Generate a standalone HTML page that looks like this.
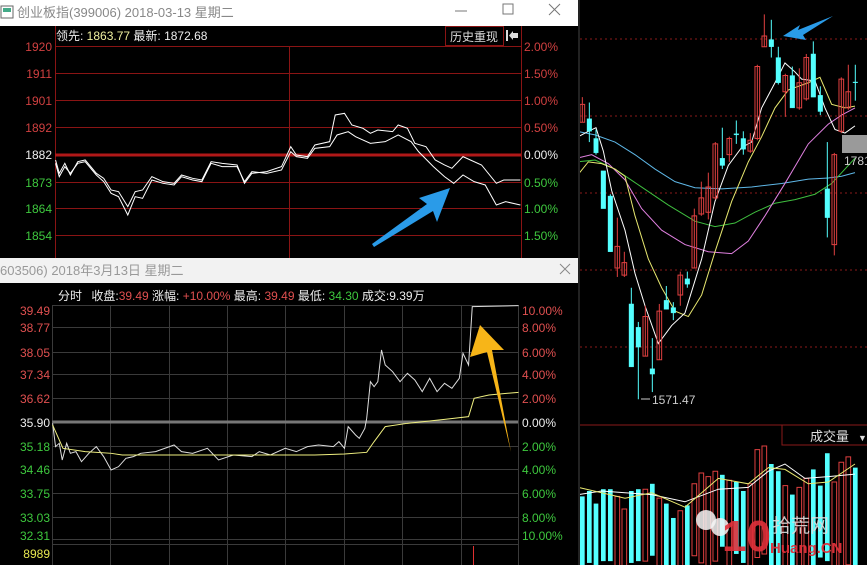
<!DOCTYPE html>
<html><head><meta charset="utf-8"><style>
html,body{margin:0;padding:0;background:#000;width:867px;height:565px;overflow:hidden}
svg{display:block}
text{font-family:"Liberation Sans","Noto Sans CJK SC",sans-serif}
.ns{vector-effect:non-scaling-stroke}
</style></head><body>
<svg width="867" height="565" viewBox="0 0 867 565" xmlns="http://www.w3.org/2000/svg" font-size="12">
<rect width="867" height="565" fill="#000"/>

<!-- RIGHT K-LINE PANEL -->
<g stroke="#8a1a1a" stroke-dasharray="2,3" stroke-width="1">
<line x1="580" y1="39" x2="867" y2="39"/><line x1="580" y1="116" x2="867" y2="116"/>
<line x1="580" y1="193" x2="867" y2="193"/><line x1="580" y1="270" x2="867" y2="270"/>
<line x1="580" y1="347" x2="867" y2="347"/>
</g>
<g transform="translate(575 0) scale(0.3333 0.3597)">
<g fill="none" stroke-width="1" class="ns">
<polyline class="ns" stroke="#5fb8e8" points="5,365 60,375 120,395 180,430 240,470 300,505 360,522 440,525 530,520 620,510 700,498 760,495 800,490 840,480"/>
<polyline class="ns" stroke="#3fbf3f" points="5,450 60,445 120,470 200,520 280,570 360,615 420,630 480,620 540,590 600,565 660,555 720,540 770,510 800,480 840,440"/>
<polyline class="ns" stroke="#e080e0" points="5,440 50,430 100,455 150,500 200,580 260,640 330,680 400,700 470,705 520,670 570,600 630,510 700,400 760,345 800,320 840,300"/>
<polyline class="ns" stroke="#e8e870" points="5,490 40,450 80,455 120,470 150,490 180,600 220,720 260,800 300,865 340,880 380,820 420,700 470,560 520,450 560,380 600,300 640,250 700,230 735,215 770,290 810,300 840,295"/>
<polyline class="ns" stroke="#fff" points="10,380 40,365 63,355 85,420 110,530 150,640 180,760 210,850 250,955 290,905 330,870 380,720 420,560 460,460 500,410 530,395 560,300 600,230 630,175 660,200 680,220 720,225 750,300 780,360 810,370 840,350"/>
</g>
<g class="ns" stroke-width="1">
<g stroke="#e04040" fill="none">
<line class="ns" x1="22" y1="270" x2="22" y2="340"/><rect class="ns" x="15" y="290" width="14" height="50"/>
<line class="ns" x1="127" y1="605" x2="127" y2="770"/><rect class="ns" x="120" y="685" width="14" height="60"/>
<line class="ns" x1="148" y1="700" x2="148" y2="770"/><rect class="ns" x="141" y="730" width="14" height="35"/>
<line class="ns" x1="211" y1="850" x2="211" y2="990"/><rect class="ns" x="204" y="880" width="14" height="110"/>
<line class="ns" x1="253" y1="845" x2="253" y2="1000"/><rect class="ns" x="246" y="865" width="14" height="135"/>
<line class="ns" x1="316" y1="755" x2="316" y2="850"/><rect class="ns" x="309" y="765" width="14" height="55"/>
<line class="ns" x1="358" y1="580" x2="358" y2="745"/><rect class="ns" x="351" y="600" width="14" height="145"/>
<line class="ns" x1="379" y1="505" x2="379" y2="600"/><rect class="ns" x="372" y="550" width="14" height="45"/>
<line class="ns" x1="400" y1="480" x2="400" y2="610"/><rect class="ns" x="393" y="520" width="14" height="70"/>
<line class="ns" x1="421" y1="395" x2="421" y2="555"/><rect class="ns" x="414" y="400" width="14" height="150"/>
<line class="ns" x1="463" y1="380" x2="463" y2="450"/><rect class="ns" x="456" y="385" width="14" height="45"/>
<line class="ns" x1="526" y1="370" x2="526" y2="425"/><rect class="ns" x="519" y="390" width="14" height="30"/>
<line class="ns" x1="547" y1="180" x2="547" y2="390"/><rect class="ns" x="540" y="185" width="14" height="200"/>
<line class="ns" x1="568" y1="40" x2="568" y2="130"/><rect class="ns" x="561" y="100" width="14" height="30"/>
<line class="ns" x1="631" y1="205" x2="631" y2="325"/><rect class="ns" x="624" y="210" width="14" height="45"/>
<line class="ns" x1="673" y1="190" x2="673" y2="305"/><rect class="ns" x="666" y="230" width="14" height="70"/>
<line class="ns" x1="694" y1="150" x2="694" y2="280"/><rect class="ns" x="687" y="160" width="14" height="115"/>
<line class="ns" x1="778" y1="425" x2="778" y2="710"/><rect class="ns" x="771" y="430" width="14" height="250"/>
<line class="ns" x1="799" y1="215" x2="799" y2="370"/><rect class="ns" x="792" y="220" width="14" height="145"/>
<line class="ns" x1="820" y1="180" x2="820" y2="305"/><rect class="ns" x="813" y="255" width="14" height="45"/>
</g>
<g stroke="#54ffff" fill="#54ffff">
<line class="ns" x1="43" y1="285" x2="43" y2="395"/><rect x="36" y="330" width="14" height="35"/>
<line class="ns" x1="63" y1="360" x2="63" y2="430"/><rect x="56" y="385" width="14" height="40"/>
<rect x="78" y="475" width="14" height="105"/>
<line class="ns" x1="106" y1="540" x2="106" y2="700"/><rect x="99" y="545" width="14" height="155"/>
<rect x="162" y="845" width="14" height="175"/><line class="ns" x1="169" y1="800" x2="169" y2="1020"/>
<line class="ns" x1="190" y1="895" x2="190" y2="1110"/><rect x="183" y="910" width="14" height="55"/>
<line class="ns" x1="232" y1="940" x2="232" y2="1090"/><rect x="225" y="1025" width="14" height="15"/>
<line class="ns" x1="274" y1="795" x2="274" y2="860"/><rect x="267" y="835" width="14" height="25"/>
<line class="ns" x1="295" y1="840" x2="295" y2="890"/><rect x="288" y="855" width="14" height="15"/>
<line class="ns" x1="337" y1="755" x2="337" y2="800"/><rect x="330" y="775" width="14" height="15"/>
<line class="ns" x1="442" y1="355" x2="442" y2="470"/><rect x="435" y="440" width="14" height="20"/>
<line class="ns" x1="484" y1="335" x2="484" y2="400"/><rect x="477" y="372" width="14" height="3"/>
<line class="ns" x1="505" y1="365" x2="505" y2="430"/><rect x="498" y="385" width="14" height="30"/>
<line class="ns" x1="589" y1="55" x2="589" y2="160"/><rect x="582" y="110" width="14" height="20"/>
<line class="ns" x1="610" y1="130" x2="610" y2="235"/><rect x="603" y="160" width="14" height="70"/>
<line class="ns" x1="652" y1="185" x2="652" y2="300"/><rect x="645" y="210" width="14" height="90"/>
<line class="ns" x1="715" y1="115" x2="715" y2="270"/><rect x="708" y="150" width="14" height="120"/>
<line class="ns" x1="736" y1="240" x2="736" y2="320"/><rect x="729" y="265" width="14" height="45"/>
<line class="ns" x1="757" y1="395" x2="757" y2="660"/><rect x="750" y="525" width="14" height="80"/>
<line class="ns" x1="841" y1="180" x2="841" y2="280"/><rect x="834" y="228" width="14" height="2"/>
</g>
</g>
</g>
<rect x="842" y="135" width="25" height="18" fill="#9a9a9a"/>
<text x="844" y="165" fill="#ccc" font-size="12">1781</text>
<line x1="641" y1="399" x2="650" y2="399" stroke="#ccc"/>
<text x="652" y="404" fill="#ccc" font-size="12">1571.47</text>
<polygon points="783,36 800,25 798,30 833,16 803,35 806,40" fill="#2a9be8"/>

<!-- right volume -->
<line x1="580" y1="425" x2="867" y2="425" stroke="#8a1a1a"/>
<rect x="782" y="425" width="90" height="20" fill="none" stroke="#8a1a1a"/>
<text x="810" y="441" fill="#ddd" font-size="13">成交量</text>
<text x="858" y="441" fill="#ddd" font-size="9">▼</text>
<g transform="translate(575 0) scale(0.3333 0.3597)">
<g fill="#54ffff">
<rect x="36" y="1365" width="14" height="200"/><rect x="56" y="1400" width="14" height="200"/>
<rect x="78" y="1360" width="14" height="200"/><rect x="99" y="1360" width="14" height="200"/>
<rect x="162" y="1365" width="14" height="200"/><rect x="183" y="1360" width="14" height="200"/>
<rect x="225" y="1345" width="14" height="200"/><rect x="267" y="1400" width="14" height="200"/>
<rect x="288" y="1440" width="14" height="200"/><rect x="330" y="1405" width="14" height="200"/>
<rect x="435" y="1320" width="14" height="200"/><rect x="477" y="1340" width="14" height="200"/>
<rect x="498" y="1365" width="14" height="200"/><rect x="582" y="1290" width="14" height="300"/>
<rect x="603" y="1310" width="14" height="300"/><rect x="645" y="1375" width="14" height="200"/>
<rect x="708" y="1305" width="14" height="300"/><rect x="729" y="1350" width="14" height="200"/>
<rect x="750" y="1260" width="14" height="300"/><rect x="834" y="1300" width="14" height="300"/>
<rect x="15" y="1380" width="14" height="200"/>
</g>
<g fill="none" stroke="#e04040">
<rect class="ns" x="120" y="1380" width="14" height="200"/><rect class="ns" x="141" y="1415" width="14" height="200"/>
<rect class="ns" x="204" y="1360" width="14" height="200"/><rect class="ns" x="246" y="1385" width="14" height="200"/>
<rect class="ns" x="309" y="1420" width="14" height="200"/><rect class="ns" x="351" y="1345" width="14" height="200"/>
<rect class="ns" x="372" y="1315" width="14" height="250"/><rect class="ns" x="393" y="1325" width="14" height="250"/>
<rect class="ns" x="414" y="1310" width="14" height="250"/><rect class="ns" x="456" y="1335" width="14" height="250"/>
<rect class="ns" x="519" y="1345" width="14" height="250"/><rect class="ns" x="540" y="1250" width="14" height="300"/>
<rect class="ns" x="561" y="1240" width="14" height="300"/><rect class="ns" x="624" y="1350" width="14" height="250"/>
<rect class="ns" x="666" y="1355" width="14" height="250"/><rect class="ns" x="687" y="1330" width="14" height="250"/>
<rect class="ns" x="771" y="1340" width="14" height="250"/><rect class="ns" x="792" y="1285" width="14" height="300"/>
<rect class="ns" x="813" y="1270" width="14" height="300"/>
</g>
<polyline class="ns" fill="none" stroke="#fff" points="10,1375 80,1365 150,1370 230,1375 330,1395 430,1360 520,1355 580,1310 630,1290 690,1330 760,1325 840,1318"/>
<polyline class="ns" fill="none" stroke="#e8e870" points="10,1355 80,1370 150,1385 230,1370 330,1410 430,1330 520,1345 580,1300 630,1305 700,1345 760,1340 840,1290"/>
</g>
<!-- watermark -->
<circle cx="706" cy="520" r="10" fill="#f4f4f4" opacity="0.85"/>
<circle cx="720" cy="527" r="9" fill="#f4f4f4" opacity="0.85"/>
<text x="722" y="551" fill="#e0303a" font-size="44" font-weight="bold" opacity="0.9">10</text>
<text x="772" y="532" fill="#ddd" font-size="19" opacity="0.9">拾荒网</text>
<text x="770" y="553" fill="#e0303a" font-size="15" font-weight="bold" opacity="0.95">Huang.CN</text>
<rect x="578" y="0" width="2" height="565" fill="#222"/>

<!-- TOP WINDOW -->
<rect x="0" y="0" width="578" height="26" fill="#fff"/>
<rect x="1" y="6" width="12" height="12" fill="#fff" stroke="#666"/><rect x="3" y="8" width="8" height="4" fill="#4a8"/>
<text x="17" y="17" fill="#888" font-size="13">创业板指(399006) 2018-03-13 星期二</text>
<line x1="455" y1="11" x2="467" y2="11" stroke="#777"/>
<rect x="503" y="4" width="10" height="10" fill="none" stroke="#777"/>
<path d="M549 4 L560 15 M560 4 L549 15" stroke="#777"/>
<rect x="0" y="26" width="578" height="232" fill="#000"/>
<g stroke="#8a1414" stroke-width="1">
<line x1="55" y1="46.5" x2="521" y2="46.5"/><line x1="55" y1="73.5" x2="521" y2="73.5"/>
<line x1="55" y1="100.5" x2="521" y2="100.5"/><line x1="55" y1="127.5" x2="521" y2="127.5"/>
<line x1="55" y1="182.5" x2="521" y2="182.5"/><line x1="55" y1="208.5" x2="521" y2="208.5"/>
<line x1="55" y1="235.5" x2="521" y2="235.5"/>
<line x1="55.5" y1="26" x2="55.5" y2="258"/><line x1="521.5" y1="26" x2="521.5" y2="258"/>
<line x1="289.5" y1="46" x2="289.5" y2="258"/>
</g>
<line x1="55" y1="155" x2="521" y2="155" stroke="#b01818" stroke-width="3"/>
<g font-size="12" text-anchor="end">
<text x="52" y="51" fill="#d04040">1920</text><text x="52" y="78" fill="#d04040">1911</text>
<text x="52" y="105" fill="#d04040">1901</text><text x="52" y="132" fill="#d04040">1892</text>
<text x="52" y="159" fill="#eee">1882</text><text x="52" y="187" fill="#3ec83e">1873</text>
<text x="52" y="213" fill="#3ec83e">1864</text><text x="52" y="240" fill="#3ec83e">1854</text>
</g>
<g font-size="12">
<text x="524" y="51" fill="#d04040">2.00%</text><text x="524" y="78" fill="#d04040">1.50%</text>
<text x="524" y="105" fill="#d04040">1.00%</text><text x="524" y="132" fill="#d04040">0.50%</text>
<text x="524" y="159" fill="#eee">0.00%</text><text x="524" y="187" fill="#3ec83e">0.50%</text>
<text x="524" y="213" fill="#3ec83e">1.00%</text><text x="524" y="240" fill="#3ec83e">1.50%</text>
</g>
<text x="56" y="40" fill="#eee">领先: <tspan fill="#f0f0a0">1863.77</tspan> 最新: <tspan fill="#eee">1872.68</tspan></text>
<rect x="445.5" y="26.5" width="58" height="19" fill="none" stroke="#8a1414"/>
<text x="450" y="41" fill="#ddd" font-size="12">历史重现</text>
<rect x="506" y="30" width="2" height="11" fill="#ddd"/><polygon points="509,35.5 513,31 513,33 518,33 518,38 513,38 513,40" fill="#ddd"/>
<g transform="scale(0.3704 0.3333)" fill="none" stroke="#fff" stroke-width="1">
<polyline class="ns" points="150,480 160,520 175,490 190,525 210,485 230,480 260,520 280,535 300,570 320,575 345,620 365,575 385,570 410,530 440,545 470,550 490,525 520,535 545,540 570,485 600,490 640,495 660,550 680,520 720,515 760,500 785,440 800,465 830,470 850,435 890,425 905,345 930,340 950,375 980,385 1000,400 1020,390 1060,395 1075,375 1100,385 1120,430 1150,440 1175,480 1200,495 1220,505 1250,470 1270,480 1300,495 1340,550 1360,540 1405,540"/>
<polyline class="ns" points="150,490 160,530 175,500 190,520 210,490 230,485 260,525 280,545 300,580 320,590 345,645 365,590 385,595 410,540 440,550 470,555 490,530 520,540 545,545 570,490 600,500 640,500 660,545 680,515 720,520 760,510 785,455 800,470 830,475 850,445 890,440 910,405 940,395 960,410 1000,430 1040,425 1075,405 1110,425 1130,455 1170,500 1200,530 1225,550 1250,525 1280,545 1310,555 1340,615 1365,605 1405,615"/>
</g>
<polygon points="450,188 437,222 433,211 374,247 372,244 427,204 419,198" fill="#2a9be8"/>

<!-- BOTTOM WINDOW -->
<rect x="0" y="258" width="578" height="25" fill="#f2f2f2"/>
<text x="0" y="275" fill="#999" font-size="13">603506) 2018年3月13日 星期二</text>
<path d="M560 264 L570 274 M570 264 L560 274" stroke="#888"/>
<rect x="0" y="283" width="578" height="282" fill="#000"/>
<text x="58" y="300" fill="#eee" font-size="12">分时 <tspan dx="6">收盘:</tspan><tspan fill="#e05050">39.49</tspan> 涨幅: <tspan fill="#e05050">+10.00%</tspan> 最高: <tspan fill="#e05050">39.49</tspan> 最低: <tspan fill="#3ec83e">34.30</tspan> 成交:9.39万</text>
<g stroke="#3a3a3a" stroke-width="1">
<line x1="52" y1="305.5" x2="518" y2="305.5"/><line x1="52" y1="327.5" x2="518" y2="327.5"/>
<line x1="52" y1="352.5" x2="518" y2="352.5"/><line x1="52" y1="374.5" x2="518" y2="374.5"/>
<line x1="52" y1="398.5" x2="518" y2="398.5"/><line x1="52" y1="446.5" x2="518" y2="446.5"/>
<line x1="52" y1="469.5" x2="518" y2="469.5"/><line x1="52" y1="493.5" x2="518" y2="493.5"/>
<line x1="52" y1="517.5" x2="518" y2="517.5"/><line x1="52" y1="539.5" x2="518" y2="539.5"/>
<line x1="52" y1="544.5" x2="518" y2="544.5"/>
<line x1="52.5" y1="305" x2="52.5" y2="565"/><line x1="110.5" y1="305" x2="110.5" y2="565"/>
<line x1="169.5" y1="305" x2="169.5" y2="565"/><line x1="227.5" y1="305" x2="227.5" y2="565"/>
<line x1="285.5" y1="305" x2="285.5" y2="565"/><line x1="344.5" y1="305" x2="344.5" y2="565"/>
<line x1="402.5" y1="305" x2="402.5" y2="565"/><line x1="461.5" y1="305" x2="461.5" y2="565"/>
<line x1="518.5" y1="305" x2="518.5" y2="565"/>
</g>
<line x1="52" y1="422" x2="518" y2="422" stroke="#777" stroke-width="3"/>
<g font-size="12" text-anchor="end">
<text x="50" y="315" fill="#e05050">39.49</text><text x="50" y="332" fill="#e05050">38.77</text>
<text x="50" y="357" fill="#e05050">38.05</text><text x="50" y="379" fill="#e05050">37.34</text>
<text x="50" y="403" fill="#e05050">36.62</text><text x="50" y="427" fill="#eee">35.90</text>
<text x="50" y="451" fill="#3ec83e">35.18</text><text x="50" y="474" fill="#3ec83e">34.46</text>
<text x="50" y="498" fill="#3ec83e">33.75</text><text x="50" y="522" fill="#3ec83e">33.03</text>
<text x="50" y="540" fill="#3ec83e">32.31</text><text x="50" y="558" fill="#e8e850">8989</text>
</g>
<g font-size="12">
<text x="522" y="315" fill="#e05050">10.00%</text><text x="522" y="332" fill="#e05050">8.00%</text>
<text x="522" y="357" fill="#e05050">6.00%</text><text x="522" y="379" fill="#e05050">4.00%</text>
<text x="522" y="403" fill="#e05050">2.00%</text><text x="522" y="427" fill="#eee">0.00%</text>
<text x="522" y="451" fill="#3ec83e">2.00%</text><text x="522" y="474" fill="#3ec83e">4.00%</text>
<text x="522" y="498" fill="#3ec83e">6.00%</text><text x="522" y="522" fill="#3ec83e">8.00%</text>
<text x="522" y="540" fill="#3ec83e">10.00%</text>
</g>
<line x1="473.5" y1="546" x2="473.5" y2="565" stroke="#e03030"/>
<g transform="translate(0 255) scale(0.3704 0.3333)" fill="none" stroke-width="1">
<polyline class="ns" stroke="#ddd" points="142,505 150,575 160,565 168,615 180,565 190,595 205,590 220,620 240,595 260,575 280,605 300,645 320,635 340,610 360,605 380,595 420,590 470,570 490,590 520,595 560,580 590,615 630,600 680,605 700,590 730,600 770,580 800,590 830,575 860,570 900,575 915,560 930,580 940,515 960,540 970,550 985,520 990,490 1000,380 1010,395 1020,380 1030,285 1040,330 1060,350 1080,380 1100,355 1120,375 1140,410 1160,370 1180,410 1200,385 1220,400 1240,370 1250,295 1265,330 1275,155 1400,152"/>
<polyline class="ns" stroke="#f0f080" points="142,510 170,580 230,590 300,595 330,600 850,600 930,597 990,592 1010,560 1040,515 1100,505 1200,493 1265,485 1280,430 1320,420 1400,412"/>
</g>
<polygon points="480,325 504,350 492,350 511,452 487,352 470,357" fill="#f7b518"/>
</svg>
</body></html>
